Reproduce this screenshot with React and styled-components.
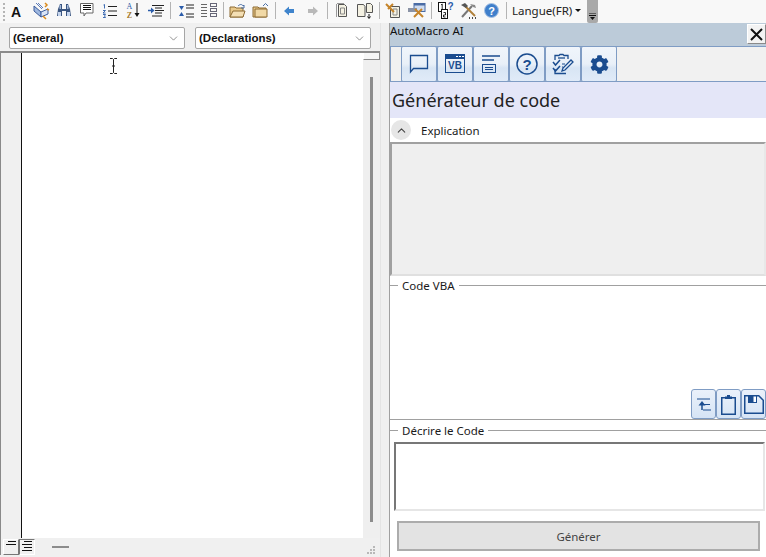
import React from 'react';
import styled, { createGlobalStyle } from 'styled-components';
import { ChevronDown, ChevronUp } from 'lucide-react';
import { FaCog } from 'react-icons/fa';

const Global = createGlobalStyle`
  html, body { margin: 0; padding: 0; background: #f0f0f0; }
  #root { width: 766px; height: 557px; overflow: hidden; }
`;

const Page = styled.div`
  width: 766px;
  height: 557px;
  display: flex;
  flex-direction: column;
  font-family: 'Noto Sans', 'Open Sans', sans-serif;
  font-size: 11.5px;
  color: #1a1a1a;
  background: #f0f0f0;
`;

/* top toolbar */
const Toolbar = styled.div`
  height: 23px;
  flex: none;
  display: flex;
  align-items: flex-start;
  padding-left: 6px;
  background: #f8f8f8;
  position: relative;
`;

const Grip = styled.div`
  position: absolute;
  left: 3px;
  top: 3px;
  width: 2px;
  height: 18px;
  background: repeating-linear-gradient(to bottom, #b5b5b5 0 2px, transparent 2px 4px);
`;

const Slot = styled.div`
  width: 23px;
  height: 21px;
  flex: none;
  display: flex;
  align-items: center;
  justify-content: center;
`;

const Sep = styled.div`
  width: ${({ $w }) => $w || 6}px;
  height: 17px;
  margin-top: 2px;
  flex: none;
  display: flex;
  justify-content: center;
  &::after {
    content: '';
    width: 1px;
    background: #b4b4b4;
  }
`;

const LangMenu = styled.div`
  display: flex;
  align-items: center;
  gap: 3px;
  margin-left: 3px;
  height: 20px;
  font-size: 11.5px;
  color: #222;
`;

const Caret = styled.span`
  width: 0;
  height: 0;
  border-left: 3px solid transparent;
  border-right: 3px solid transparent;
  border-top: 3px solid #111;
`;

const Overflow = styled.div`
  width: 11px;
  height: 23px;
  margin-left: 6px;
  background: #a9a9a9;
  border-radius: 0 0 2px 2px;
  display: flex;
  flex-direction: column;
  align-items: center;
  justify-content: flex-end;
  padding-bottom: 3px;
  box-sizing: border-box;
  flex: none;
`;

const Main = styled.div`
  flex: 1;
  display: flex;
  min-height: 0;
`;

/* code window */
const CodeWindow = styled.div`
  width: 380px;
  flex: none;
  display: flex;
  flex-direction: column;
  border-right: 1px solid #e4e4e4;
`;

const ComboRow = styled.div`
  height: 28px;
  flex: none;
  display: flex;
  gap: 10px;
  padding: 4px 0 2px 9px;
  box-sizing: border-box;
`;

const Combo = styled.div`
  width: ${({ $w }) => $w}px;
  height: 22px;
  box-sizing: border-box;
  display: flex;
  align-items: center;
  justify-content: space-between;
  padding: 0 4px 0 3px;
  background: #fff;
  border: 1px solid #a6a6a6;
  border-radius: 2px;
  font-family: 'Liberation Sans', Arial, sans-serif;
  font-weight: bold;
  font-size: 11.5px;
  color: #111;
  svg { color: #666; }
`;

const EditorFrame = styled.div`
  flex: 1;
  display: flex;
  min-height: 0;
  border-top: 2px solid #8a8a8a;
  border-left: 1px solid #8a8a8a;
`;

const Gutter = styled.div`
  width: 20px;
  flex: none;
  background: #f0f0f0;
  border-right: 1px solid #111;
`;

const Editor = styled.div`
  flex: 1;
  background: #fff;
  position: relative;
`;

const Cursor = styled.svg`
  position: absolute;
  left: 87px;
  top: 5px;
`;

const ScrollTrack = styled.div`
  width: 17px;
  flex: none;
  background: #efefef;
  display: flex;
  flex-direction: column;
  align-items: center;
`;

const ScrollSplit = styled.div`
  width: 17px;
  height: 7px;
  flex: none;
  box-sizing: border-box;
  background: #f6f6f6;
  border: 1px solid #8a8a8a;
  border-top: none;
  border-left-color: #fff;
`;

const ScrollThumb = styled.div`
  width: 3px;
  height: 445px;
  margin-top: 17px;
  background: #8c8c8c;
`;

const BottomBar = styled.div`
  height: 17px;
  flex: none;
  display: flex;
  align-items: center;
  padding-left: 2px;
  background: #f0f0f0;
  position: relative;
  border-left: 1px solid #8a8a8a;
  box-sizing: content-box;
  margin-bottom: 2px;
`;

const ViewButton = styled.div`
  width: 16px;
  height: 16px;
  box-sizing: border-box;
  display: flex;
  align-items: center;
  justify-content: center;
  flex: none;
  border: 1px solid;
  border-color: ${({ $on }) => ($on ? '#777 #fff #fff #777' : '#fff #777 #777 #fff')};
`;

const HScroll = styled.div`
  width: 17px;
  height: 2px;
  margin-left: 17px;
  background: #8c8c8c;
`;

const ResizeGrip = styled.svg`
  position: absolute;
  right: 3px;
  bottom: 1px;
`;

const Gap = styled.div`
  width: 8px;
  flex: none;
  background: #f0f0f0;
  border-right: 1px solid #a0a0a0;
`;

/* side panel */
const Panel = styled.div`
  flex: 1;
  min-width: 0;
  display: flex;
  flex-direction: column;
  background: #fff;
`;

const TitleBar = styled.div`
  height: 23px;
  flex: none;
  display: flex;
  align-items: flex-start;
  justify-content: space-between;
  line-height: 16px;
  background: #bccbd9;
  font-size: 11.5px;
  color: #111;
`;

const CloseButton = styled.div`
  width: 19px;
  height: 20px;
  margin-top: 1px;
  box-sizing: border-box;
  display: flex;
  align-items: center;
  justify-content: center;
  background: #f3f3f3;
  border: 1px solid;
  border-color: #fff #8a8a8a #8a8a8a #fff;
`;

const TabStrip = styled.div`
  height: 36px;
  flex: none;
  box-sizing: border-box;
  display: flex;
  padding-left: 10px;
  background: #f1f1f1;
  border-top: 1px solid #7f9cc4;
  border-bottom: 1px solid #7f9cc4;
  border-left: 1px solid #7f9cc4;
`;

const blueButton = `
  box-sizing: border-box;
  display: flex;
  align-items: center;
  justify-content: center;
  flex: none;
  background: linear-gradient(to bottom, #f0f5fb 0%, #e9f0f8 50%, #d8e5f4 62%, #e0ebf8 100%);
  border: 1px solid #7f9cc4;
`;

const Tab = styled.div`
  ${blueButton}
  width: 36px;
  margin: -1px 0;
  height: 36px;
  border-radius: 2px;
  color: #1a4c8f;
`;

const Heading = styled.div`
  height: 36px;
  flex: none;
  display: flex;
  align-items: center;
  padding-left: 2px;
  background: #e4e6f8;
  font-size: 18px;
  color: #222;
`;

const SectionHeader = styled.div`
  height: 24px;
  flex: none;
  display: flex;
  align-items: center;
  gap: 10px;
  padding-left: 1px;
`;

const RoundToggle = styled.div`
  width: 20px;
  height: 20px;
  border-radius: 50%;
  background: #e6e6e6;
  display: flex;
  align-items: center;
  justify-content: center;
  color: #444;
`;

const ExplainBox = styled.div`
  height: 134px;
  flex: none;
  box-sizing: border-box;
  background: #efefef;
  border: 2px solid #a0a0a0;
  border-right-color: #e8e8e8;
  border-bottom-color: #e0e0e0;
`;

const GroupBox = styled.div`
  flex: none;
  height: ${({ $h }) => $h}px;
  margin-top: ${({ $top }) => $top}px;
  box-sizing: border-box;
  border-top: 1px solid #a0a0a0;
  position: relative;
  display: flex;
  flex-direction: column;
`;

const GroupLabel = styled.span`
  position: absolute;
  left: 8px;
  top: -8px;
  padding: 0 4px;
  background: #fff;
  line-height: 16px;
`;

const CodeActions = styled.div`
  margin-top: auto;
  display: flex;
  justify-content: flex-end;
`;

const ActionButton = styled.div`
  ${blueButton}
  width: 25px;
  height: 30px;
  border-radius: 3px;
  background: linear-gradient(to bottom, #eaf1fa, #d6e4f5);
`;

const PromptBox = styled.div`
  height: 69px;
  margin: 11px 1px 0 4px;
  box-sizing: border-box;
  background: #fff;
  border: 2px solid #777;
  border-right-color: #e6e6e6;
  border-bottom-color: #e6e6e6;
`;

const GenerateButton = styled.div`
  height: 30px;
  margin: 10px 6px 0 7px;
  box-sizing: border-box;
  display: flex;
  align-items: center;
  justify-content: center;
  background: #e3e3e3;
  border: 2px solid #acacac;
  color: #444;
`;

const Rule = styled.div`
  flex: none;
  height: 1px;
  background: #a0a0a0;
`;

const Blue = '#1a4c8f';

const IconA = () => (
  <svg width="16" height="16" viewBox="0 0 16 16"><text x="6" y="14" textAnchor="middle" fontFamily="Liberation Sans" fontWeight="bold" fontSize="14" fill="#111">A</text></svg>
);
const IconSparkle = () => (
  <svg width="18" height="18" viewBox="0 0 18 18" fill="none">
    <path d="M2 4l7 6v5L2 9z" fill="#9fb8e0" stroke="#3c5c9c" />
    <path d="M9 15l7-3V7l-7 3z" fill="#d9e4f6" stroke="#3c5c9c" />
    <path d="M4 1l6 6M6 1l5 5" stroke="#5d7bb8" />
    <path d="M13 1l2 2-2 2M15 7l2 1M11 14l3 3" stroke="#d98a1e" strokeWidth="1.5" />
  </svg>
);
const IconBinoculars = () => (
  <svg width="16" height="13" viewBox="0 0 16 13">
    <path d="M2 5L4 0h2v5h4V0h2l2 5 1 7h-5V7H6v5H1z" fill="#3a5580" />
    <rect x="2" y="8" width="3" height="4" fill="#c5d5ee" />
    <rect x="11" y="8" width="3" height="4" fill="#c5d5ee" />
    <rect x="3.5" y="1" width="1.5" height="4" fill="#a5bad9" />
    <rect x="11" y="1" width="1.5" height="4" fill="#a5bad9" />
  </svg>
);
const IconComment = () => (
  <svg width="14" height="15" viewBox="0 0 14 15" fill="none">
    <path d="M.5 .5h12.5v9.5H6l-2 3v-3H.5z" fill="#fff" stroke="#666" />
    <path d="M3 2.5h8M3 4.5h8M3 6.5h8" stroke="#111" />
  </svg>
);
const IconNumbered = () => (
  <svg width="15" height="14" viewBox="0 0 15 14" fill="none">
    <path d="M6 2.5h9M6 7h9M6 11.5h9" stroke="#222" strokeWidth="1.2" />
    <path d="M1.5 1l1-.5v4M1 6.5h2.5L1 9h2.5M1 10.5h2.5l-1 1.5 1 1.5H1" stroke="#2a5caa" strokeWidth="0.9" />
  </svg>
);
const IconSort = () => (
  <svg width="15" height="17" viewBox="0 0 15 17">
    <text x="4.5" y="7" textAnchor="middle" fontFamily="Liberation Serif" fontSize="8" fill="#2a5caa">A</text>
    <text x="4.5" y="16" textAnchor="middle" fontFamily="Liberation Serif" fontWeight="bold" fontSize="8" fill="#a57a2a">Z</text>
    <path d="M12 1v12" stroke="#111" />
    <path d="M9.5 11L12 15l2.5-4z" fill="#111" />
  </svg>
);
const IconOutdent = () => (
  <svg width="16" height="12" viewBox="0 0 16 12" fill="none">
    <path d="M4 .5h12M7 3h7M7 5.5h9M7 8h7M4 11h10" stroke="#222" />
    <path d="M0 5.5h4" stroke="#2a5caa" strokeWidth="1.5" />
    <path d="M3 2.5L6.5 5.5 3 8.5z" fill="#2a5caa" />
  </svg>
);
const IconParagraphSpace = () => (
  <svg width="16" height="16" viewBox="0 0 16 16" fill="none">
    <path d="M8 2h8M8 5h8M8 11h8M8 14h8" stroke="#222" strokeWidth="1.2" />
    <path d="M1 3h5L3.5 7zM1 13h5L3.5 9z" fill="#2a5caa" />
  </svg>
);
const IconTwoLists = () => (
  <svg width="16" height="15" viewBox="0 0 16 15" fill="none">
    <path d="M0 1.5h6M0 4.5h6M0 7.5h6M0 10.5h6M0 13.5h6" stroke="#666" />
    <rect x="9.5" y=".5" width="6" height="3" stroke="#667" />
    <rect x="9.5" y="5.5" width="6" height="3" stroke="#667" />
    <rect x="9.5" y="10.5" width="6" height="3" stroke="#667" />
  </svg>
);
const IconFolder = ({ up }) => (
  <svg width="17" height="16" viewBox="0 0 17 16" fill="none">
    <path d="M1 4h5l1 1h7v9H1z" fill="#e9c98a" stroke="#8c6a33" />
    {up
      ? <path d="M3 14V6h12v8z" fill="#f1d9a6" stroke="#8c6a33" />
      : <path d="M1 14l3-6h12l-2 6z" fill="#f4dfb4" stroke="#8c6a33" />}
    <path d={up ? 'M11 3l2.5-2.5L16 3' : 'M9 3c2-2 4-2 5 0l1-1v3h-3'} stroke="#4a6fa5" />
  </svg>
);
const IconArrow = ({ back }) => (
  <svg width="11" height="10" viewBox="0 0 11 10">
    {back
      ? <path d="M0 5l5-4.5V3h5v4H5v2.5z" fill="#3f84cc" />
      : <path d="M11 5L6 .5V3H1v4h5v2.5z" fill="#b9b9b9" />}
  </svg>
);
const IconPage = () => (
  <svg width="12" height="15" viewBox="0 0 12 15" fill="none">
    <path d="M2.5 1.5h6l2 2v10h-8z" fill="#f4f1e2" stroke="#555" />
    <path d="M1 .5h7M.5 1v13" stroke="#999" />
    <path d="M4.5 5h4v6h-4z" stroke="#888" />
  </svg>
);
const IconPages = () => (
  <svg width="17" height="16" viewBox="0 0 17 16" fill="none">
    <path d="M1.5 1.5h6l1.5 2v10H1.5z" fill="#f4f1e2" stroke="#555" />
    <path d="M10.5 .5h4l2 2v7h-6z" fill="#f4f1e2" stroke="#555" />
    <path d="M13 11v4M11.5 13.5L13 15.5l1.5-2" stroke="#111" />
  </svg>
);
const IconPageX = () => (
  <svg width="17" height="16" viewBox="0 0 17 16" fill="none">
    <path d="M5.5 3.5h9v11h-9z" fill="#f4f1e2" stroke="#555" />
    <path d="M8 6h4v6H8z" stroke="#888" />
    <path d="M1 1l8 8M8 1L3 6" stroke="#c5842a" strokeWidth="2" />
  </svg>
);
const IconWindowX = () => (
  <svg width="18" height="15" viewBox="0 0 18 15" fill="none">
    <rect x="6" y=".5" width="11" height="8" fill="#cfdcf0" stroke="#4b6ca5" />
    <rect x="6" y=".5" width="11" height="2" fill="#4b6ca5" />
    <rect x="0" y="5" width="9" height="4" fill="#8a93a6" />
    <path d="M7 6l8 8M14 6l-8 8" stroke="#c5842a" strokeWidth="2" />
  </svg>
);
const IconOneTwoHelp = () => (
  <svg width="16" height="18" viewBox="0 0 16 18">
    <rect x=".5" y=".5" width="7" height="9" fill="#fff" stroke="#111" />
    <rect x="3.5" y="7.5" width="6" height="9" fill="#fff" stroke="#111" />
    <path d="M3 3l1.2-1v5M5.5 10.5h2v2.5h-2v2h2" stroke="#111" fill="none" strokeWidth="0.9" />
    <text x="12.5" y="8" textAnchor="middle" fontFamily="Liberation Sans" fontWeight="bold" fontSize="10" fill="#2a5caa">?</text>
  </svg>
);
const IconTools = () => (
  <svg width="17" height="17" viewBox="0 0 17 17" fill="none">
    <path d="M2 15L12 4" stroke="#777" strokeWidth="2" />
    <path d="M15 14L5 4" stroke="#b0803a" strokeWidth="2" />
    <path d="M1 3l4-2 3 3-2 2z" fill="#555" />
    <path d="M10 2l5 1 1 3-3-1z" fill="#888" />
    <path d="M9 16h1M12 16h1M15 16h1" stroke="#111" strokeWidth="1.5" />
  </svg>
);
const IconHelp = () => (
  <svg width="15" height="15" viewBox="0 0 15 15">
    <circle cx="7.5" cy="7.5" r="7" fill="#3f7fcb" stroke="#a9c3e4" />
    <text x="7.5" y="11.5" textAnchor="middle" fontFamily="Liberation Sans" fontWeight="bold" fontSize="11" fill="#fff">?</text>
  </svg>
);

const TabChat = () => (
  <svg width="20" height="20" viewBox="0 0 20 20" fill="none">
    <path d="M1.5 1.5h17v13H4.5L1.5 18z" stroke={Blue} strokeWidth="1.3" />
  </svg>
);
const TabVB = () => (
  <svg width="20" height="20" viewBox="0 0 20 20" fill="none">
    <rect x=".5" y=".5" width="19" height="18" stroke={Blue} />
    <rect x="0" y="0" width="20" height="5" fill={Blue} />
    <path d="M11 2.5h2M14 2.5h2M17 2.5h2" stroke="#fff" />
    <text x="10" y="15" textAnchor="middle" fontFamily="Liberation Sans" fontWeight="bold" fontSize="10" fill={Blue}>VB</text>
  </svg>
);
const TabForm = () => (
  <svg width="20" height="20" viewBox="0 0 20 20" fill="none">
    <path d="M1 2h18M1 6h12" stroke={Blue} strokeWidth="1.6" />
    <rect x="1.5" y="10.5" width="13" height="8" stroke={Blue} />
    <path d="M4 13.5h8M4 15.5h8" stroke={Blue} />
  </svg>
);
const TabHelp = () => (
  <svg width="22" height="22" viewBox="0 0 22 22" fill="none">
    <circle cx="11" cy="11" r="10" stroke={Blue} strokeWidth="1.5" />
    <text x="11" y="16.5" textAnchor="middle" fontFamily="Liberation Sans" fontWeight="bold" fontSize="15" fill={Blue}>?</text>
  </svg>
);
const TabChecklist = () => (
  <svg width="22" height="22" viewBox="0 0 22 22" fill="none">
    <path d="M3 7V2.5h4l1-1h3l1 1h4V6M3 16v4.5h11" stroke={Blue} strokeWidth="1.3" />
    <path d="M6 5h7" stroke={Blue} strokeWidth="1.3" />
    <path d="M1 9l2.5 3L8 7M1 15l2.5 3L8 13" stroke={Blue} strokeWidth="1.5" />
    <path d="M10 18l1-3 8-8 2 2-8 8z" stroke={Blue} strokeWidth="1.3" />
    <path d="M10 11h3M10 14h1" stroke={Blue} />
  </svg>
);

const ActionIndent = () => (
  <svg width="14" height="13" viewBox="0 0 14 13" fill="none">
    <path d="M0 1h13M6 12h8" stroke={Blue} />
    <path d="M5 3L1.5 7.5h7z" fill={Blue} />
    <path d="M5 6v6" stroke={Blue} strokeWidth="1.5" />
    <path d="M7 6.5h6" stroke={Blue} />
  </svg>
);
const ActionClipboard = () => (
  <svg width="15" height="21" viewBox="0 0 15 21" fill="none">
    <rect x=".75" y="3.75" width="13.5" height="16.5" stroke={Blue} strokeWidth="1.5" />
    <path d="M4 5V2.5h2V1h3v1.5h2V5z" fill={Blue} />
  </svg>
);
const ActionSave = () => (
  <svg width="20" height="19" viewBox="0 0 20 19" fill="none">
    <path d="M.75.75h14l4.5 4.5v13H.75z" stroke={Blue} strokeWidth="1.5" />
    <path d="M4 1h9v7H4z" fill={Blue} />
    <path d="M9.5 1.5h2.5v5.5H9.5z" fill="#fff" />
  </svg>
);

const IndentLines = ({ n = 3 }) => (
  <svg width="10" height="11" viewBox="0 0 10 11" fill="none">
    {Array.from({ length: n }).map((_, i) => (
      <path key={i} d={`M${i % 2 ? 0 : 2} ${i * 3 + 0.5}h${i % 2 ? 10 : 8}`} stroke="#111" />
    ))}
  </svg>
);

const groups = [
  [IconA, IconSparkle, IconBinoculars, IconComment, IconNumbered, IconSort, IconOutdent],
  [IconParagraphSpace, IconTwoLists],
  [IconFolder, () => <IconFolder up />],
  [() => <IconArrow back />, IconArrow],
  [IconPage, IconPages],
  [IconPageX, IconWindowX],
  [IconOneTwoHelp, IconTools, IconHelp]
];

const tabs = [
  TabChat,
  TabVB,
  TabForm,
  TabHelp,
  TabChecklist,
  () => <FaCog size={19} />
];

export default function App() {
  return (
    <Page>
      <Global />
      <Toolbar>
        <Grip />
        {groups.map((icons, g) => (
          <React.Fragment key={g}>
            {icons.map((Icon, i) => (
              <Slot key={i}><Icon /></Slot>
            ))}
            <Sep $w={g === 0 ? 7 : 6} />
          </React.Fragment>
        ))}
        <LangMenu>Langue(FR)<Caret /></LangMenu>
        <Overflow>
          <svg width="7" height="7" viewBox="0 0 7 7">
            <path d="M0 0h7M0 2.5h7" stroke="#111" />
            <path d="M1 4h5L3.5 7z" fill="#111" />
          </svg>
        </Overflow>
      </Toolbar>
      <Main>
        <CodeWindow>
          <ComboRow>
            <Combo $w={176}>(General)<ChevronDown size={13} strokeWidth={1.3} /></Combo>
            <Combo $w={176}>(Declarations)<ChevronDown size={13} strokeWidth={1.3} /></Combo>
          </ComboRow>
          <EditorFrame>
            <Gutter />
            <Editor>
              <Cursor width="9" height="16" viewBox="0 0 9 16" fill="none">
                <path d="M1 .5h2.5l1 1 1-1H8M4.5 1.5v13M1 15.5h2.5l1-1 1 1H8M3 8h3" stroke="#222" />
              </Cursor>
            </Editor>
            <ScrollTrack>
              <ScrollSplit />
              <ScrollThumb />
            </ScrollTrack>
          </EditorFrame>
          <BottomBar>
            <ViewButton><IndentLines n={2} /></ViewButton>
            <ViewButton $on><IndentLines n={4} /></ViewButton>
            <HScroll />
            <ResizeGrip width="12" height="8" viewBox="0 0 12 8" fill="#b8b8b8">
              <rect x="8" y="0" width="2" height="2" />
              <rect x="5" y="3" width="2" height="2" />
              <rect x="8" y="3" width="2" height="2" />
              <rect x="2" y="6" width="2" height="2" />
              <rect x="5" y="6" width="2" height="2" />
              <rect x="8" y="6" width="2" height="2" />
            </ResizeGrip>
          </BottomBar>
        </CodeWindow>
        <Gap />
        <Panel>
          <TitleBar>
            AutoMacro AI
            <CloseButton>
              <svg width="13" height="13" viewBox="0 0 13 13" fill="none">
                <path d="M1 1l11 11M12 1L1 12" stroke="#111" strokeWidth="2" />
              </svg>
            </CloseButton>
          </TitleBar>
          <TabStrip>
            {tabs.map((Icon, i) => (
              <Tab key={i}><Icon /></Tab>
            ))}
          </TabStrip>
          <Heading>Générateur de code</Heading>
          <SectionHeader>
            <RoundToggle><ChevronUp size={13} strokeWidth={2} /></RoundToggle>
            Explication
          </SectionHeader>
          <ExplainBox />
          <GroupBox $top={9} $h={134}>
            <GroupLabel>Code VBA</GroupLabel>
            <CodeActions>
              <ActionButton><ActionIndent /></ActionButton>
              <ActionButton><ActionClipboard /></ActionButton>
              <ActionButton><ActionSave /></ActionButton>
            </CodeActions>
          </GroupBox>
          <Rule />
          <GroupBox $top={10} $h={125}>
            <GroupLabel>Décrire le Code</GroupLabel>
            <PromptBox />
            <GenerateButton>Générer</GenerateButton>
          </GroupBox>
        </Panel>
      </Main>
    </Page>
  );
}
